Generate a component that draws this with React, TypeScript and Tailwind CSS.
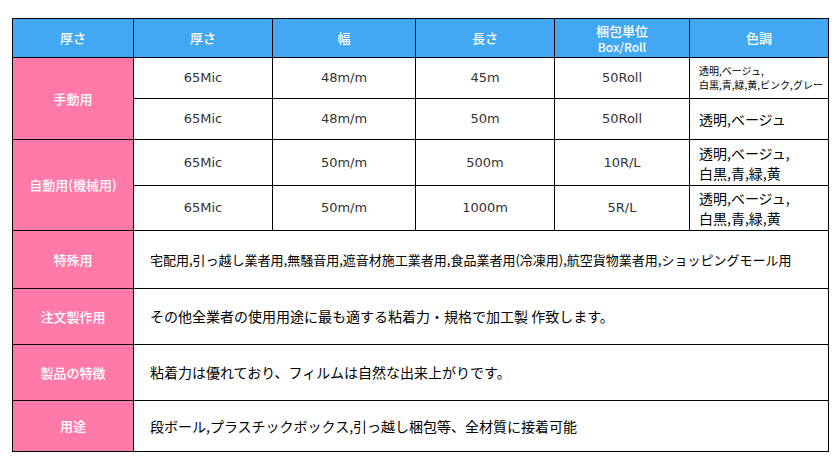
const rows = [
  { w: "48m/m", l: "45m", p: "50Roll", c: ["透明,ベージュ,", "白黒,青,緑,黄,ピンク,グレー"], small: true },
  { w: "48m/m", l: "50m", p: "50Roll", c: ["透明,ベージュ"], small: false },
  { w: "50m/m", l: "500m", p: "10R/L", c: ["透明,ベージュ,", "白黒,青,緑,黄"], small: false },
  { w: "50m/m", l: "1000m", p: "5R/L", c: ["透明,ベージュ,", "白黒,青,緑,黄"], small: false },
];

const notes = [
  { label: "特殊用", text: "宅配用,引っ越し業者用,無騒音用,遮音材施工業者用,食品業者用(冷凍用),航空貨物業者用,ショッピングモール用", h: "h-[58px]", size: "text-[13px]" },
  { label: "注文製作用", text: "その他全業者の使用用途に最も適する粘着力・規格で加工製 作致します。", h: "h-[56px]", size: "text-[14px]" },
  { label: "製品の特徴", text: "粘着力は優れており、フィルムは自然な出来上がりです。", h: "h-[56px]", size: "text-[14px]" },
  { label: "用途", text: "段ボール,プラスチックボックス,引っ越し梱包等、全材質に接着可能", h: "h-[51px]", size: "text-[14px]" },
];

const cjk = "font-['Noto_Sans_CJK_JP',sans-serif]";
const latin = "font-['DejaVu_Sans','Noto_Sans_CJK_JP',sans-serif]";

const App = () => {
  const heights = ["h-[41px]", "h-[41px]", "h-[46px]", "h-[45px]"];

  return (
    <div className="min-h-screen bg-white pl-[12px] pt-[18px]">
      <table className={`w-[817px] table-fixed border-collapse border border-black ${cjk}`}>
        <colgroup>
          <col className="w-[121px]" />
          <col className="w-[139px]" />
          <col className="w-[143px]" />
          <col className="w-[139px]" />
          <col className="w-[135px]" />
          <col className="w-[139px]" />
        </colgroup>
        <thead>
          <tr className="h-[39px] bg-[#42a8f4] text-[13px] text-white">
            <th className="border border-black font-medium">厚さ</th>
            <th className="border border-black font-medium">厚さ</th>
            <th className="border border-black font-medium">幅</th>
            <th className="border border-black font-medium">長さ</th>
            <th className="border border-black font-medium">
              <div className="leading-[17px]">梱包単位</div>
              <div className="text-[12px] leading-[15px]">Box/Roll</div>
            </th>
            <th className="border border-black font-medium">色調</th>
          </tr>
        </thead>
        <tbody>
          {rows.map((r, i) => (
            <tr key={i} className={heights[i]}>
              {i % 2 === 0 && (
                <td rowSpan={2} className="border border-black bg-[#ff7aa8] text-center text-[13px] font-medium text-white">
                  {i === 0 ? "手動用" : "自動用(機械用)"}
                </td>
              )}
              <td className={`border border-black text-center text-[13px] text-[#333] ${latin}`}>65Mic</td>
              <td className={`border border-black text-center text-[13px] text-[#333] ${latin}`}>{r.w}</td>
              <td className={`border border-black text-center text-[13px] text-[#333] ${latin}`}>{r.l}</td>
              <td className={`border border-black text-center text-[13px] text-[#333] ${latin}`}>{r.p}</td>
              <td
                className={`border border-black pl-[9px] text-black ${
                  r.small ? "text-[10px] leading-[14px]" : "text-[14px] leading-[20px]"
                }`}
              >
                {r.c.map((line, j) => (
                  <div key={j}>{line}</div>
                ))}
              </td>
            </tr>
          ))}
          {notes.map((n, i) => (
            <tr key={i} className={n.h}>
              <td className="border border-black bg-[#ff7aa8] text-center text-[13px] font-medium text-white">{n.label}</td>
              <td colSpan={5} className={`border border-black pl-[16px] text-black ${n.size}`}>
                {n.text}
              </td>
            </tr>
          ))}
        </tbody>
      </table>
    </div>
  );
};

export default App;
